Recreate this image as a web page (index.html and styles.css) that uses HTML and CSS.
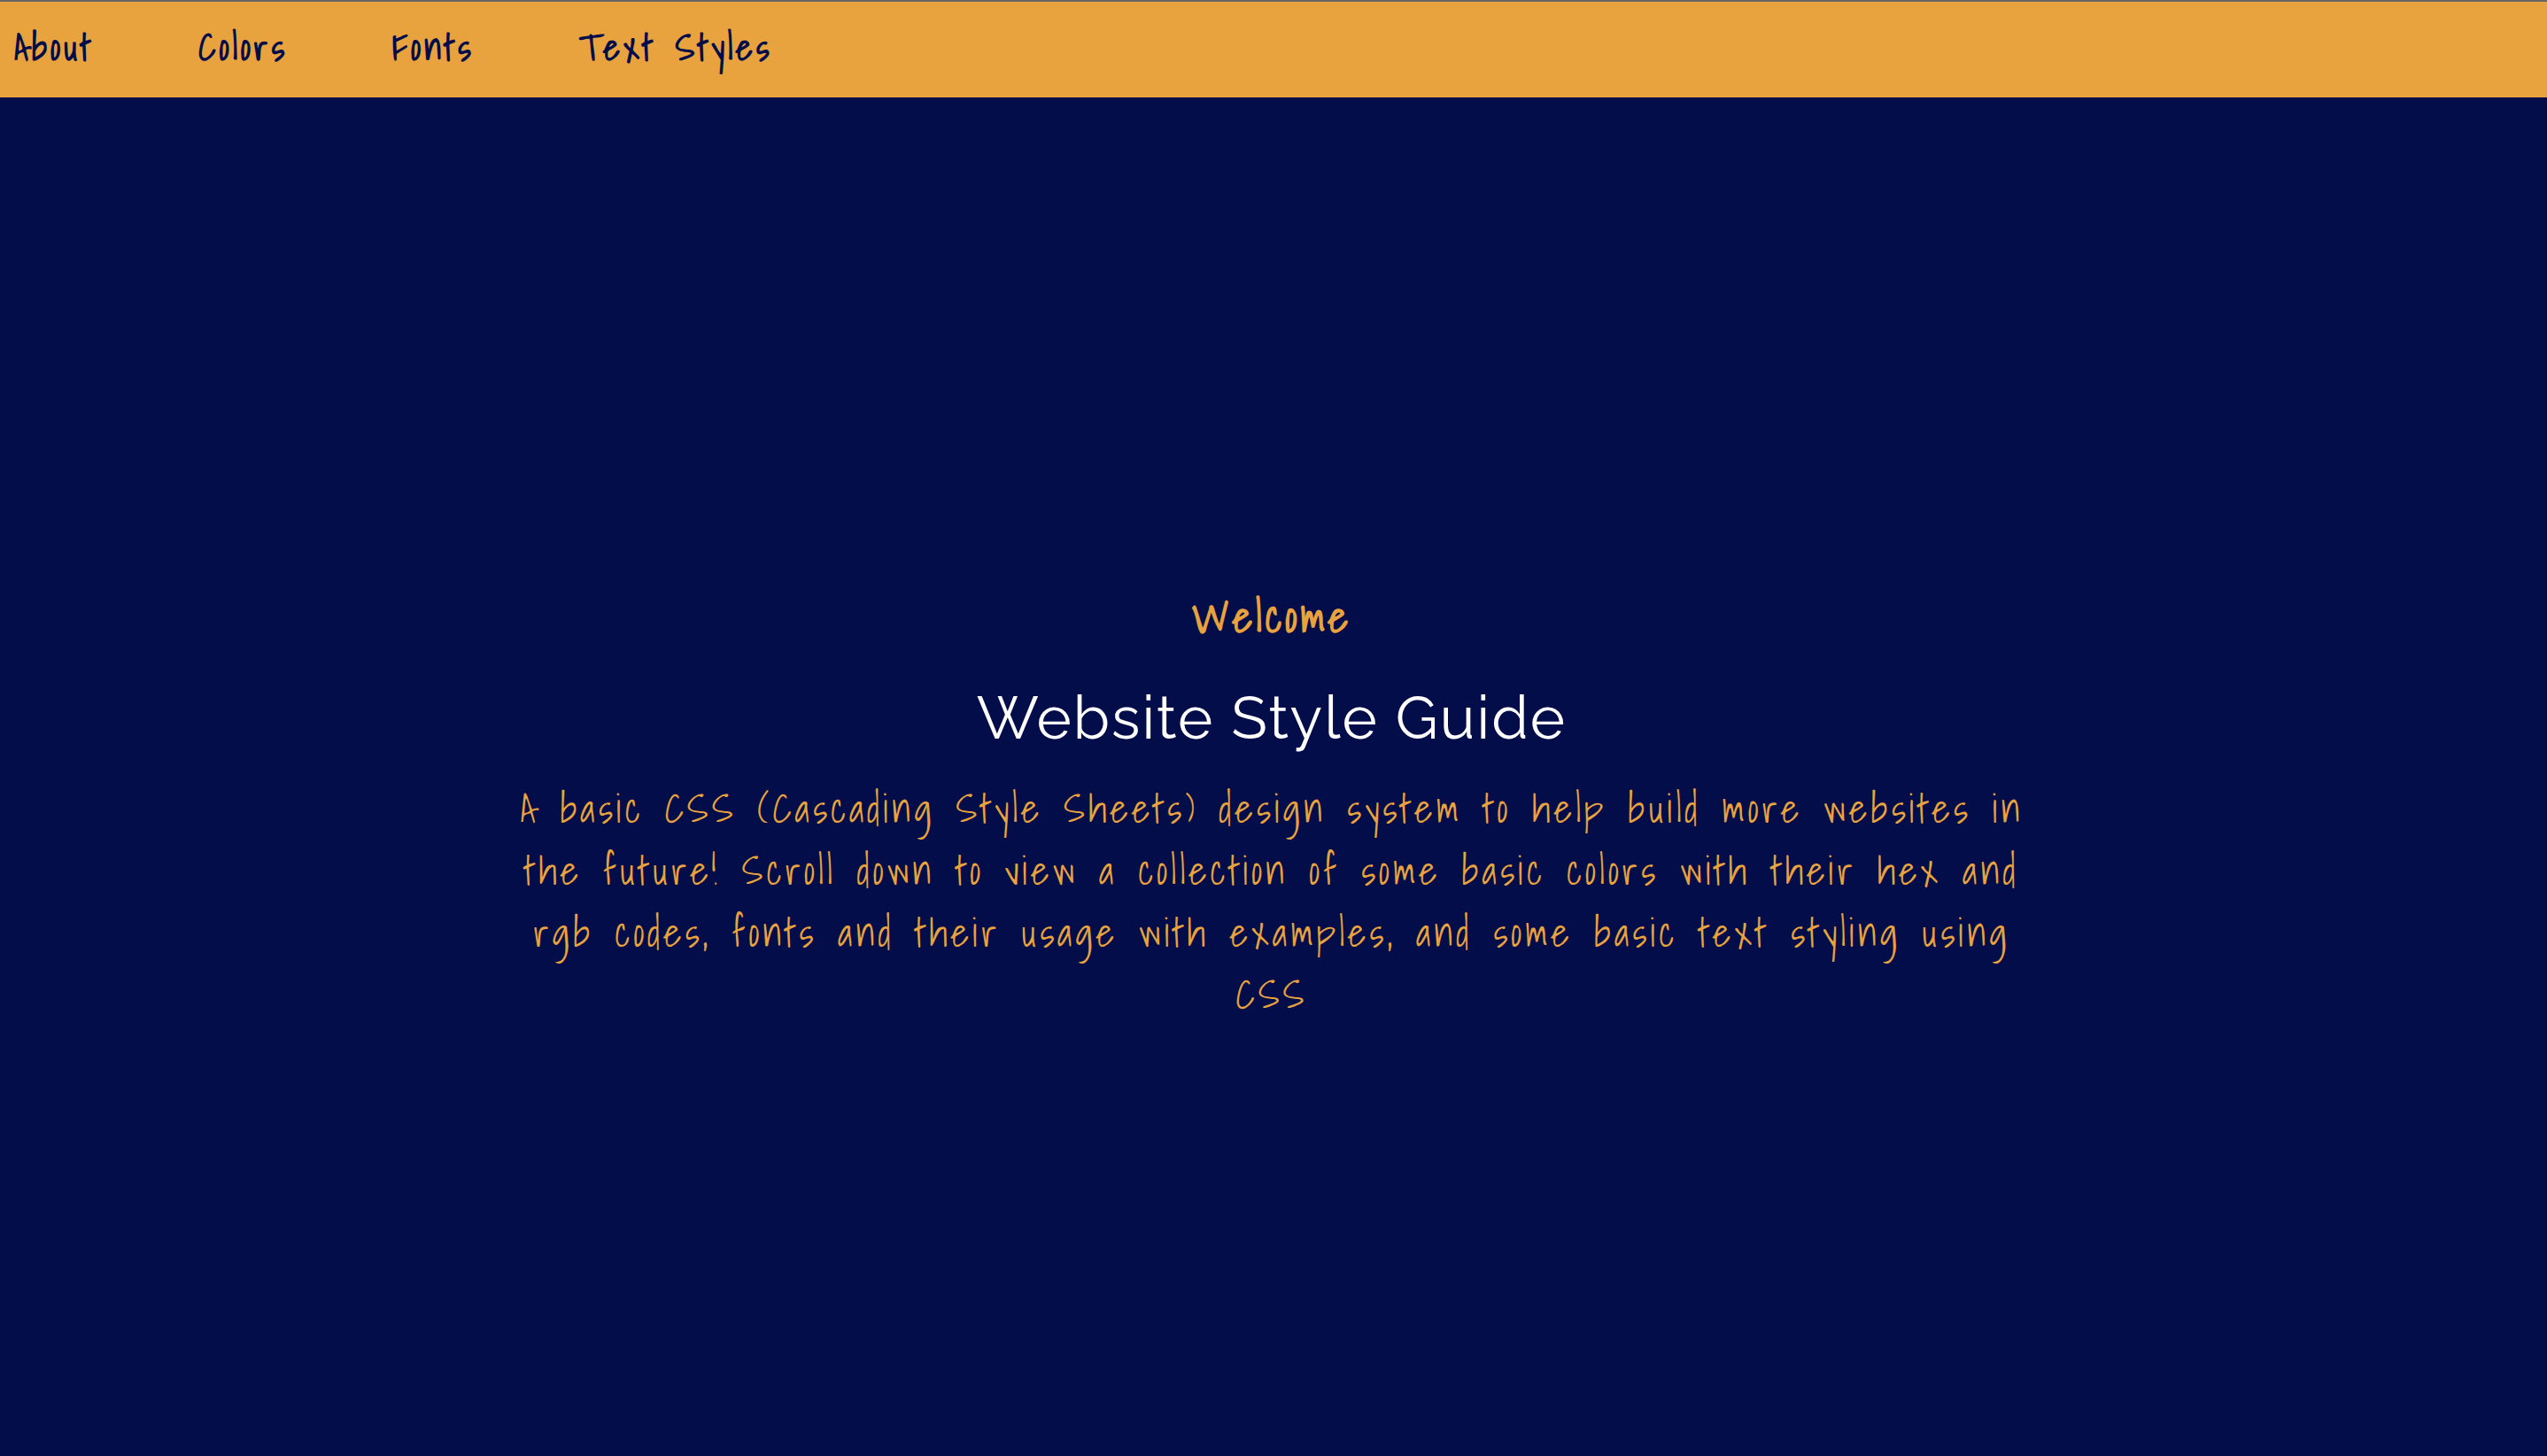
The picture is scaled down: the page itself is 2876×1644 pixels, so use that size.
FILE: index.html
```html
<!DOCTYPE html>
<html lang="en">
<head>
<meta charset="utf-8">
<meta name="viewport" content="width=device-width, initial-scale=1">
<title>Website Style Guide</title>
<link rel="stylesheet" href="styles.css">
</head>
<body>
<header class="site-header">
<nav class="site-nav" aria-label="Main">
<a class="nav-link" href="#about">About</a>
<a class="nav-link" href="#colors">Colors</a>
<a class="nav-link" href="#fonts">Fonts</a>
<a class="nav-link" href="#text-styles">Text Styles</a>
</nav>
</header>
<main class="hero" id="about">
<h2 class="welcome">Welcome</h2>
<h1 class="title">Website Style Guide</h1>
<p class="intro">A basic CSS (Cascading Style Sheets) design system to help build more websites in the future! Scroll down to view a collection of some basic colors with their hex and rgb codes, fonts and their usage with examples, and some basic text styling using CSS</p>
</main>
</body>
</html>
```
FILE: styles.css
```css
:root {
  --navy: #030d4a;
  --amber: #e8a33f;
}

* {
  box-sizing: border-box;
}

body {
  display: flex;
  flex-direction: column;
  min-height: 100vh;
  margin: 0;
  background: var(--navy);
  color: var(--amber);
  font-family: "Shadows Into Light", "Liberation Sans", sans-serif;
  letter-spacing: 4px;
}

.site-header {
  padding: 16px 16px 22px;
  border-top: 2px solid #666;
  background: var(--amber);
}

.site-nav {
  display: flex;
  flex-wrap: wrap;
  gap: 0 118px;
}

.nav-link {
  color: var(--navy);
  font-size: 40px;
  font-weight: 700;
  line-height: 70px;
  text-decoration: none;
}

.hero {
  display: flex;
  flex: 1;
  flex-direction: column;
  align-items: center;
  justify-content: center;
  padding: 66px 4px 0 0;
  text-align: center;
}

.welcome {
  margin: 0 0 34px;
  font-size: 48px;
  line-height: 70px;
}

.title {
  margin: 0 0 22px;
  color: #fff;
  font-family: Raleway, Inter, sans-serif;
  font-size: 67px;
  font-weight: 400;
  line-height: 90px;
  letter-spacing: 2px;
}

.intro {
  width: 60%;
  margin: 0;
  font-size: 44px;
  line-height: 70px;
}
```
